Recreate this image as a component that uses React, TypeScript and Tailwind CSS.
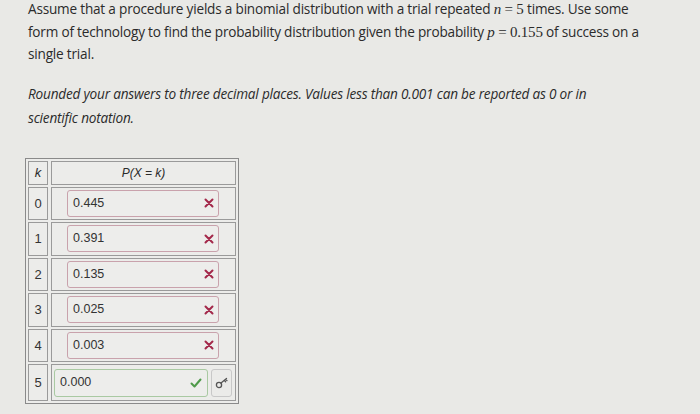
import React from 'react';

type Row = { k: number; value: string; correct: boolean };

const rows: Row[] = [
  { k: 0, value: '0.445', correct: false },
  { k: 1, value: '0.391', correct: false },
  { k: 2, value: '0.135', correct: false },
  { k: 3, value: '0.025', correct: false },
  { k: 4, value: '0.003', correct: false },
  { k: 5, value: '0.000', correct: true },
];

const Cross = () => (
  <svg width="10" height="10" viewBox="0 0 10 10" className="shrink-0">
    <path d="M1.5 1.5 L8.5 8.5 M8.5 1.5 L1.5 8.5" stroke="#a3284a" strokeWidth="2" strokeLinecap="round" />
  </svg>
);

const Check = () => (
  <svg width="12" height="10" viewBox="0 0 12 10" className="shrink-0">
    <path d="M1.5 5.5 L4.5 8.5 L10.5 1.5" stroke="#4f9a4a" strokeWidth="2" fill="none" strokeLinecap="round" strokeLinejoin="round" />
  </svg>
);

const KeyIcon = () => (
  <svg width="14" height="12" viewBox="0 0 14 12">
    <circle cx="4" cy="8" r="2.6" stroke="#555" strokeWidth="1.3" fill="none" />
    <path d="M6 6 L11.5 1.5 M9.2 3.4 L10.6 4.8 M10.6 2.2 L12 3.6" stroke="#555" strokeWidth="1.3" fill="none" strokeLinecap="round" />
  </svg>
);

const M = ({ children }: { children: React.ReactNode }) => (
  <span className="font-['Liberation_Serif',serif] text-[15px]">{children}</span>
);

const App: React.FC = () => {
  return (
    <div className="w-[700px] h-[414px] overflow-hidden bg-[#e9e9e6] text-[#2b2b2b] font-['Open_Sans',sans-serif]">
      <div className="pl-[28px] text-[13.6px] leading-[22.5px] tracking-[-0.2px]">
        <p className="-mt-[2px]">
          Assume that a procedure yields a binomial distribution with a trial repeated <M><i>n</i>&nbsp;=&nbsp;5</M> times. Use some
          <br />
          form of technology to find the probability distribution given the probability <M><i>p</i>&nbsp;=&nbsp;0.155</M> of success on a
          <br />
          single trial.
        </p>
        <p className="mt-[16px] italic leading-[24px]">
          Rounded your answers to three decimal places. Values less than 0.001 can be reported as 0 or in
          <br />
          scientific notation.
        </p>
      </div>

      <div className="ml-[25px] mt-[28px] w-[214px] border border-[#8a8a8a] bg-[#ececea] p-[2px] font-['Liberation_Sans',sans-serif]">
        <div className="flex flex-col gap-[2px]">
          <div className="flex h-[24px] gap-[3px]">
            <div className="flex w-[20px] items-center justify-center border border-[#9a9a9a] text-[13px] italic">k</div>
            <div className="flex flex-1 items-center justify-center border border-[#9a9a9a] text-[12px] italic">P(X = k)</div>
          </div>
          {rows.map((r) => (
            <div key={r.k} className={r.correct ? 'flex h-[37px] gap-[3px]' : 'flex h-[33.5px] gap-[3px]'}>
              <div className="flex w-[20px] items-center justify-center border border-[#9a9a9a] text-[13px] text-[#333]">{r.k}</div>
              <div className="flex flex-1 items-center border border-[#9a9a9a]">
                {r.correct ? (
                  <div className="flex w-full items-center gap-[3px] pl-[2px] pr-[3px]">
                    <div className="flex h-[28px] flex-1 items-center justify-between rounded-[3px] border border-[#a9c9a2] bg-[#ededeb] pl-[5px] pr-[5px] text-[12.5px] text-[#333]">
                      <span>{r.value}</span>
                      <Check />
                    </div>
                    <div className="flex h-[28px] w-[21px] items-center justify-center rounded-[3px] border border-[#c8c8c8] bg-[#ebebe9]">
                      <KeyIcon />
                    </div>
                  </div>
                ) : (
                  <div className="ml-[15px] flex h-[27px] w-[152px] items-center justify-between rounded-[3px] border border-[#c9a2ac] bg-[#ededeb] pl-[5px] pr-[4px] text-[12.5px] text-[#333]">
                    <span>{r.value}</span>
                    <Cross />
                  </div>
                )}
              </div>
            </div>
          ))}
        </div>
      </div>
    </div>
  );
};

export default App;
